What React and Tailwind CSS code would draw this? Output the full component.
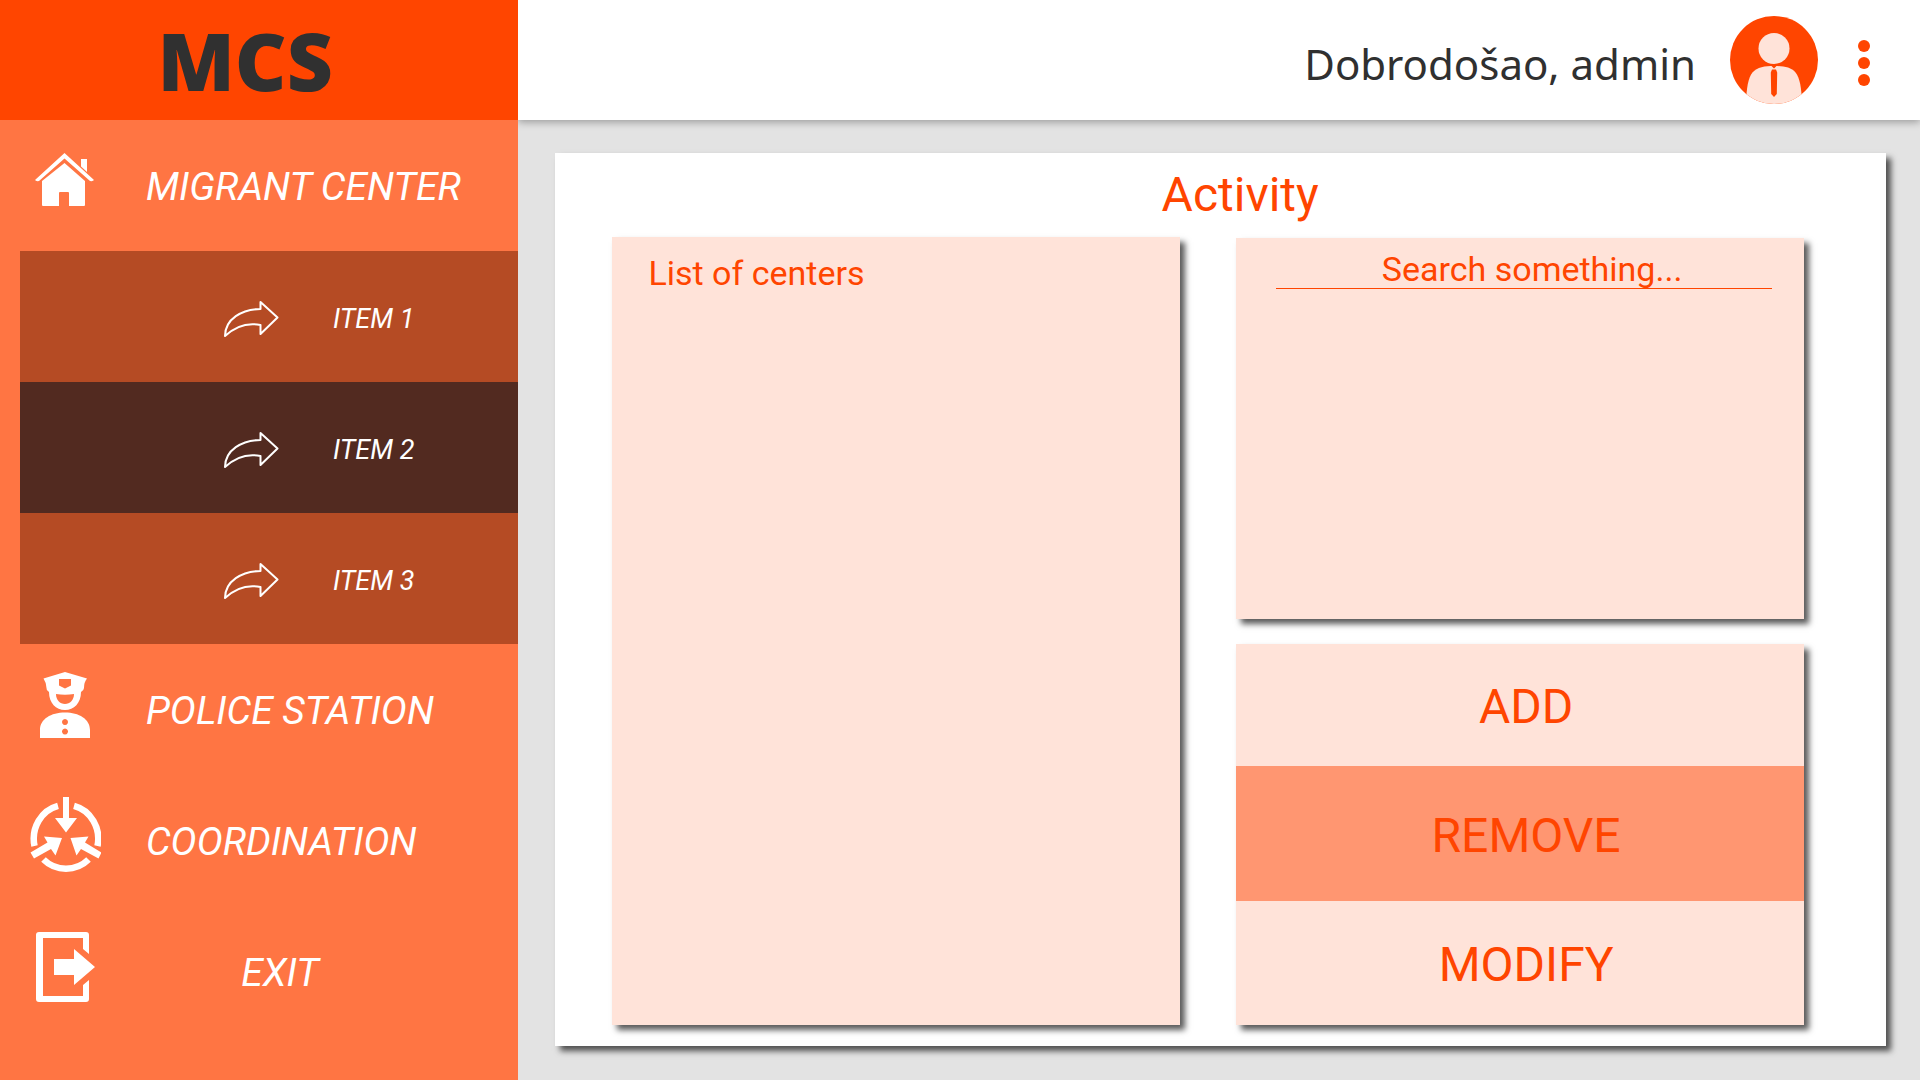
const HomeIcon = () => (
  <svg width="62" height="56" viewBox="34 153 62 56" fill="#fff" aria-hidden="true">
    <path d="M64.5 153 L94 180 Q93 181.6 90 181 L64.5 158.5 L39 181 Q36 181.6 35 180 Z" />
    <path d="M81 159 H87 V172 L81 166.500 Z" />
    <path d="M64.500 163 L85 181 V205 Q85 206 84 206 H69 V193 Q69 192 68 192 H60 Q59 192 59 193 V206 H43 Q42 206 42 205 V181 Z" />
  </svg>
);

const PoliceIcon = () => (
  <svg width="52" height="68" viewBox="39 671 52 68" fill="#fff" aria-hidden="true">
    <path fillRule="evenodd" d="M65 672 L87 678.500 Q84 682 84 688 Q84 690 81 692 C81 703 74 710 65 710 C56 710 49 703 49 692 Q46 690 46.500 688 Q46 682 43.500 678.500 Z M59 679 V685.500 L65 688.500 L71 685.500 V679 Z M56 694 C56 700 60 704 65 704 C70 704 74 700 74 694 Q65 695.500 56 694 Z" />
    <path fillRule="evenodd" d="M40 738 V730 C40 719 51 712.500 65 712.500 C79 712.500 90 719 90 730 V738 Z M65 719 a3 3 0 1 0 0.010 0 Z M65 728.500 a3 3 0 1 0 0.010 0 Z" />
  </svg>
);

const CoordinationIcon = () => (
  <svg width="72" height="80" viewBox="29 796 72 80" aria-hidden="true">
    <g fill="none" stroke="#fff" strokeWidth="6.5">
      <path d="M58 805.800 A32 34 0 0 0 34.500 846" />
      <path d="M74 805.800 A32 34 0 0 1 97.500 846" />
      <path d="M43.500 859.500 A32 32 0 0 0 88.500 859.500" />
    </g>
    <g fill="#fff">
      <path d="M63 797 H69 V818 H77 L66 832.500 L55 818 H63 Z" />
      <path d="M62 838 L44 836.500 L47.500 842.500 L30.500 852.500 L34 858.500 L51 849 L55.500 855.500 Z" />
      <path d="M70.500 838 L88.500 836.500 L85 842.500 L101.500 852.500 L98.500 858.500 L81 849 L76.500 855.500 Z" />
    </g>
  </svg>
);

const ExitIcon = () => (
  <svg width="60" height="72" viewBox="35 932 60 72" fill="#fff" aria-hidden="true">
    <path d="M39 933 H86 Q89 933 89 936 V955 L83 950 V939 H43 V997 H83 V986 L89 981 V1000 Q89 1003 86 1003 H39 Q36 1003 36 1000 V936 Q36 933 39 933 Z" />
    <path d="M54 960 H74 V950 L95 968 L74 986 V976 H54 Z" />
  </svg>
);

const ArrowIcon = () => (
  <svg width="56" height="38" viewBox="223 300 56 38" fill="none" stroke="#fff" strokeWidth="2" strokeLinejoin="round" aria-hidden="true">
    <path d="M225 336 C225 319 242 309 260.500 309 V302 L277.500 317.500 L260.500 334 V325 Q241 321 225 336 Z" />
  </svg>
);

const Avatar = () => (
  <svg width="88" height="88" viewBox="0 0 88 88" aria-hidden="true">
    <defs>
      <clipPath id="face">
        <circle cx="44" cy="44" r="44" />
      </clipPath>
    </defs>
    <circle cx="44" cy="44" r="44" fill="#ff4500" />
    <g clipPath="url(#face)">
      <circle cx="44" cy="32.500" r="15.500" fill="#ffe3d9" />
      <path d="M16 88 C16.500 72 18 62 22.500 56.500 C27 51 35 50 44 50 C53 50 61 51 65.500 56.500 C70 62 71.500 72 72 88 Z" fill="#ffe3d9" />
    </g>
    <path d="M41 49.500 H47 L44 52.500 Z M42 53.500 H46 L47.200 56.500 L46.800 78 L44 81 L41.200 78 L40.800 56.500 Z" fill="#ff4500" />
  </svg>
);

const items = [
  { label: "ITEM 1", tone: "bg-[#b54b24]" },
  { label: "ITEM 2", tone: "bg-[#522a20]" },
  { label: "ITEM 3", tone: "bg-[#b54b24]" },
];

const actions = [
  { label: "ADD", tone: "h-[122px] bg-[#ffe3d9]" },
  { label: "REMOVE", tone: "h-[135px] bg-[#ff9671]" },
  { label: "MODIFY", tone: "grow bg-[#ffe3d9]" },
];

const cardShadow = "shadow-[5px_5px_6px_#000000a6]";

function NavLink({ icon, label, centered }) {
  return (
    <a href="#" className="flex h-[131px] items-center text-[39px] leading-[44px] text-white italic">
      <span className="flex w-[130px] shrink-0 justify-center pb-2.5">{icon}</span>
      <span className={centered ? "w-[300px] pt-0.5 text-center" : "pt-0.5 pl-4"}>{label}</span>
    </a>
  );
}

export default function App() {
  return (
    <div className="flex min-h-screen bg-[#e3e3e3] font-['Roboto',sans-serif] text-[#ff4500]">
      <aside className="z-10 w-[27%] shrink-0 bg-[#ff7543]">
        <div className="flex h-[120px] items-center justify-center bg-[#ff4500] pr-7 font-['Noto_Sans',sans-serif] text-[80px] leading-none font-black text-[#303030]">
          MCS
        </div>
        <nav>
          <NavLink icon={<HomeIcon />} label="MIGRANT CENTER" />
          <div className="pl-5">
            {items.map((item) => (
              <a
                key={item.label}
                href="#"
                className={`flex h-[131px] items-center gap-[54px] pt-1 pl-[203px] text-[27px] leading-8 text-white italic ${item.tone}`}
              >
                <ArrowIcon />
                {item.label}
              </a>
            ))}
          </div>
          <NavLink icon={<PoliceIcon />} label="POLICE STATION" />
          <NavLink icon={<CoordinationIcon />} label="COORDINATION" />
          <NavLink icon={<ExitIcon />} label="EXIT" centered />
        </nav>
      </aside>

      <div className="flex min-w-0 grow flex-col">
        <header className="flex h-[120px] items-center justify-end bg-white pr-[50px] shadow-[0_2px_8px_#00000055]">
          <p className="pt-2 pr-[34px] font-['Noto_Sans',sans-serif] text-[42px] leading-none text-[#303030]">
            Dobrodošao, admin
          </p>
          <Avatar />
          <button type="button" aria-label="Menu" className="mt-1.5 ml-10 flex flex-col gap-[5px]">
            <span className="size-3 rounded-full bg-[#ff4500]" />
            <span className="size-3 rounded-full bg-[#ff4500]" />
            <span className="size-3 rounded-full bg-[#ff4500]" />
          </button>
        </header>

        <main className={`mt-[33px] mr-[34px] mb-[34px] ml-[37px] flex grow flex-col bg-white pr-[82px] pb-[21px] pl-[57px] ${cardShadow}`}>
          <h1 className="flex h-[84px] items-center justify-center pl-16 text-[48px] leading-none">Activity</h1>
          <div className="grid grow grid-cols-2 gap-14">
            <section className={`bg-[#ffe3d9] px-9 pt-4 ${cardShadow}`}>
              <h2 className="text-[34px] leading-10">List of centers</h2>
            </section>
            <div className="grid grid-rows-2 gap-[25px] pt-px">
              <section className={`bg-[#ffe3d9] pt-3 pr-8 pl-10 ${cardShadow}`}>
                <input
                  type="text"
                  aria-label="Search"
                  placeholder="Search something..."
                  className="h-[39px] w-full border-b border-[#ff4500] bg-transparent pl-4 text-center text-[34px] leading-9 outline-none placeholder:text-[#ff4500] placeholder:opacity-100"
                />
              </section>
              <div className={`flex flex-col ${cardShadow}`}>
                {actions.map((action) => (
                  <button key={action.label} type="button" className={`pt-1 pl-3 text-[48px] leading-none ${action.tone}`}>
                    {action.label}
                  </button>
                ))}
              </div>
            </div>
          </div>
        </main>
      </div>
    </div>
  );
}
